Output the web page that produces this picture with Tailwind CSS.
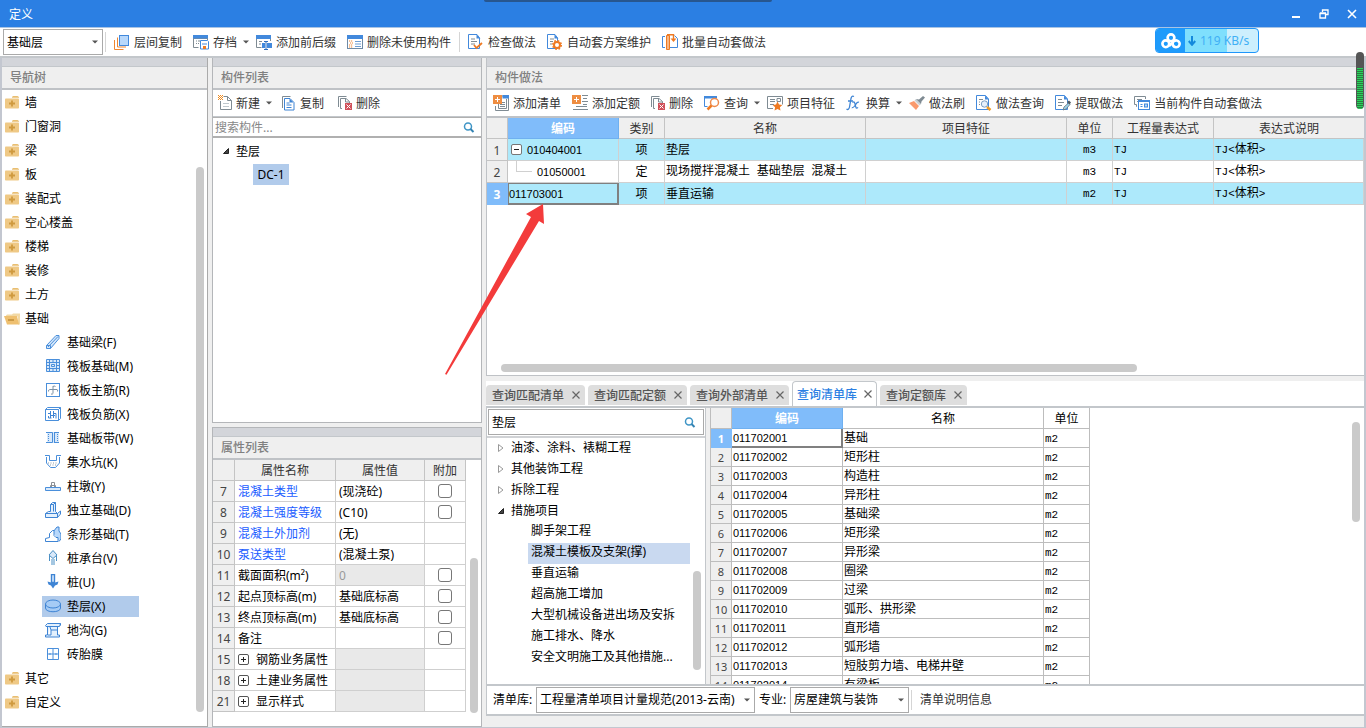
<!DOCTYPE html>
<html lang="zh-CN">
<head>
<meta charset="utf-8">
<title>定义</title>
<script src="https://cdn.jsdelivr.net/npm/@tailwindcss/browser@4"></script>
</head>
<body class="relative flex h-screen flex-col overflow-hidden bg-[#efefef] font-['Noto_Sans','Noto_Sans_CJK_SC',sans-serif] text-xs leading-4 text-black">

<!-- icon sprite -->
<svg class="hidden" xmlns="http://www.w3.org/2000/svg">
  <symbol id="copy-layer" viewBox="0 0 16 16"><path d="M3.500 3.500v9.500h8.500M.5 6v9.500h9" fill="none" stroke="#ef8632" stroke-width="1"/><rect x="5.500" y="1.500" width="9" height="10" fill="#b8d8fb" stroke="#4289dc"/></symbol>
  <symbol id="archive" viewBox="0 0 16 16"><path d="M.5 1v12.500h5M1 4.500h14M14.500 2v4" fill="none" stroke="#7f8b93"/><rect x="0" y="1" width="15" height="3.500" fill="#4289dc"/><path d="M3 7h1m1 0h2M3 9.500h1m1 0h1" stroke="#7f8b93"/><path d="M7.500 6.500h7l1 1v7.500h-8z" fill="#fff" stroke="#4289dc"/><path d="M9 10h5" stroke="#4289dc"/><rect x="10" y="12" width="3" height="3" fill="#ef7a22"/></symbol>
  <symbol id="affix" viewBox="0 0 16 16"><path d="M.5 2v11.500h5" fill="none" stroke="#7f8b93"/><rect x="0" y="1" width="15" height="4" fill="#4289dc"/><path d="M14.500 5v2M3 7.500h3M3 10h2" stroke="#7f8b93"/><path d="M6 9h3v5H6zM11 9h5v5h-5z" fill="#4289dc"/><path d="M10 7v8M8 15.500h4M8 7.500h4" stroke="#2f6fbd" fill="none"/></symbol>
  <symbol id="del-unused" viewBox="0 0 16 16"><rect x=".5" y="1.500" width="15" height="13" fill="#fff" stroke="#6e8aa5"/><rect x="0" y="1" width="16" height="4" fill="#4289dc"/><path d="M8 7.500h6M8 10h6M8 12.500h6" stroke="#6f9fd4"/><path d="M2 7h4M3 9h3M2 11h4M2 13h4" stroke="#ef8632" stroke-width="1" stroke-dasharray="1.200 .8"/></symbol>
  <symbol id="doc-check" viewBox="0 0 16 16"><path d="M9 .5H.5v14h11V4z" fill="#fff" stroke="#4289dc"/><path d="M8.500 .5v4h4z" fill="#4289dc"/><path d="M3 5h4M3 7.500h6M3 10h4" stroke="#7f8b93"/><path d="M6 11l2.500 3L14 9" fill="none" stroke="#ef7a22" stroke-width="1.800"/></symbol>
  <symbol id="doc-gear" viewBox="0 0 16 16"><path d="M8 .5H.5v14h10V4z" fill="#fff" stroke="#4289dc"/><path d="M7.500 .5v4h4z" fill="#4289dc"/><path d="M3 5h4M3 7.500h3M3 10h2" stroke="#7f8b93"/><circle cx="10" cy="11" r="3" fill="#fff" stroke="#ef7a22" stroke-width="2"/><circle cx="10" cy="11" r="4.300" fill="none" stroke="#ef7a22" stroke-width="1.500" stroke-dasharray="1.700 1.680"/></symbol>
  <symbol id="batch" viewBox="0 0 16 16"><path d="M3 2.500H.5v11H3M8 13.500h7.500v-9L12.500 1.500" fill="none" stroke="#4289dc"/><path d="M4.500 1.500h3v14h-3z" fill="#f8b684" stroke="#ef7a22"/><path d="M5 .8h6.500V5" fill="none" stroke="#ef7a22" stroke-width="1.400"/><path d="M8.500 4.500h6L11.500 8z" fill="#ef7a22"/></symbol>
  <symbol id="new-doc" viewBox="0 0 14 16"><path d="M5.500 1.500H9.500l4 4v9h-11V6" fill="#fff" stroke="#7f8b93"/><path d="M9.500 1.500V5.500h4" fill="none" stroke="#7f8b93"/><path d="M5 8.500h6M5 11.500h6" stroke="#bfc8ce"/><path d="M0 .5h5M0 2.500h5M0 4.500h5M1 1.500h4M1 3.500h4" stroke="#ef8a1d" stroke-dasharray="1 1"/></symbol>
  <symbol id="copy" viewBox="0 0 14 16"><path d="M.5 13V1.500h8" fill="none" stroke="#7f8b93"/><path d="M2.500 3.500H8l4 4v7.500H2.500z" fill="#fff" stroke="#3e84d4"/><path d="M7.500 3.500v4h4z" fill="#3e84d4"/><path d="M4.500 8h3M4.500 10h5M4.500 12.500h5" stroke="#3e84d4"/></symbol>
  <symbol id="delete" viewBox="0 0 14 16"><path d="M.5 12V1.500h8M4 13.500H2.500v-10H8l3.500 3V8M7.500 3.500v3.500h4" fill="none" stroke="#7f8b93"/><rect x="7" y="8" width="7" height="7" fill="#d0505a"/><path d="M8.500 9.500l4 4m0-4l-4 4" stroke="#fff"/></symbol>
  <symbol id="add-list" viewBox="0 0 16 16"><path d="M9 1h6.500v11" fill="none" stroke="#7f8b93"/><rect x="9.500" y="0" width="6.500" height="3.500" fill="#4289dc"/><path d="M13.500 4v9.500h-8V9M2.500 11v4.500H15.500V4M8 7.500h4M7 9.500h5M7 11.500h5" fill="none" stroke="#7f8b93"/><rect x="0" y="0" width="9" height="9" fill="#ee8d41"/><path d="M4.500 2v5M2 4.500h5" stroke="#fff"/></symbol>
  <symbol id="add-quota" viewBox="0 0 16 16"><rect x="0" y="0" width="9" height="9" fill="#ee8d41"/><path d="M4.500 2v5M2 4.500h5" stroke="#fff"/><path d="M10 .5H16M11 3.500H15M10 6.500H16M11 9.500h4M4 11.500h11M1 14.500h15" stroke="#7f8b93"/></symbol>
  <symbol id="query" viewBox="0 0 16 16"><path d="M.5 2v9.500h3" fill="none" stroke="#4289dc"/><rect x="0" y="1" width="13" height="2.500" fill="#4289dc"/><circle cx="10.500" cy="7.500" r="4" fill="#fff" stroke="#ef8a4b" stroke-width="1.500"/><path d="M7.500 10.500L3.500 14.500" stroke="#ef7a22" stroke-width="2.500"/></symbol>
  <symbol id="feature" viewBox="0 0 16 16"><path d="M6 13.500H.5v-12h15v8" fill="#fff" stroke="#7f8b93"/><path d="M3 4.500h5M3 6.500h5M3 9.500h4M10 3.500h3.500v3H10z" fill="none" stroke="#7f8b93"/><path d="M10.500 6.500l1.500 3 3.300.400-2.400 2.300.6 3.300-3-1.600-3 1.600.6-3.300-2.400-2.300 3.300-.4z" fill="#ef7a22"/></symbol>
  <symbol id="fx" viewBox="0 0 16 16"><path d="M8 1.500C6 .5 5.300 2 4.900 4L3.600 11.500c-.4 2.500-1.400 3.500-3.100 2.700M2 6h5" fill="none" stroke="#3e84d4" stroke-width="1.300"/><path d="M6.500 7.500c1.500-1.300 2-.5 2.500 1.500l.8 3c.4 1.500 1.200 1.500 2.200.3M13 7.300c-2-.7-2.500 1-4 3.200-1.500 2.200-2 2.700-3.200 2.100" fill="none" stroke="#3e84d4" stroke-width="1.200"/></symbol>
  <symbol id="brush" viewBox="0 0 16 16"><path d="M0 8l5-2 5 5-3 4z" fill="#f99a6e"/><path d="M5.500 5.500L7 4l5 5-1.500 1.500z" fill="#c9d0d4"/><path d="M7 4l3 .5L14 1l2 1.500-3.500 4L12 9z" fill="#7f8b93"/></symbol>
  <symbol id="doc-query" viewBox="0 0 16 16"><path d="M9.500 .5H.5v14h12V4z" fill="#fff" stroke="#4289dc"/><path d="M9 .5v4h4z" fill="#4289dc"/><path d="M3 4.500h4M3 7h1M3 9.500h1" stroke="#7f8b93"/><circle cx="8.500" cy="9" r="3.200" fill="#e6f0fb" stroke="#7d9fc4"/><path d="M11 12l3.500 3" stroke="#f09a23" stroke-width="2.500"/></symbol>
  <symbol id="doc-pick" viewBox="0 0 16 16"><path d="M9.500 .5H.5v14h12V4z" fill="#fff" stroke="#4289dc"/><path d="M9 .5v4h4z" fill="#4289dc"/><path d="M3 4.500h4M3 7.500h6M3 10.500h4" stroke="#7f8b93"/><path d="M8 15l1-3 4.500-4 1.500 1.500L11 14z" fill="#9ed2ea" stroke="#66727a" stroke-width=".8"/><path d="M12 7l2-1.500 2 2-1.500 2z" fill="#4d5960"/></symbol>
  <symbol id="auto-set" viewBox="0 0 16 16"><path d="M3 11.500H2.500v-2H.5v-8h11V4M3 4.500h5M3 6.500h1" fill="none" stroke="#7f8b93"/><rect x="4.500" y="5.500" width="11" height="9" fill="#fff" stroke="#4289dc"/><path d="M4 6h12" stroke="#4289dc" stroke-width="2"/><path d="M6.500 9.500h2M6.500 11.500h2" stroke="#4289dc"/><rect x="10.500" y="9" width="3" height="3" fill="#b8d8fb" stroke="#4289dc"/></symbol>
  <symbol id="search" viewBox="0 0 16 16"><circle cx="7" cy="7.500" r="3.500" fill="#fff" stroke="#3f95c6" stroke-width="1.500"/><path d="M9.500 10l3 3" stroke="#3483b2" stroke-width="2"/></symbol>
  <symbol id="folder-add" viewBox="0 0 16 16"><path d="M8 3l1-1h4.500L15 3v.7H8z" fill="#e9be70"/><rect x="1" y="4.500" width="14" height="10" rx=".8" fill="#efc986"/><path d="M8 6.500v6M5 9.500h6" stroke="#cf9a3f" stroke-width="1.800"/></symbol>
  <symbol id="folder-open" viewBox="0 0 16 16"><path d="M2 5.500l1-1h5l1-1h7v11h-2v-8H2z" fill="#f2d9a5"/><path d="M0 6h13l2 8.500H3z" fill="#efc070"/><path d="M4 10h6" stroke="#b98530" stroke-width="1.300"/></symbol>
  <symbol id="n-beam" viewBox="0 0 16 16"><path d="M1.500 11.500L11 1.500h3v3L5.500 14.500h-4zM3 13L13 2.500M1.500 11.500h4v3" fill="#d3e6fa" stroke="#4a8fdb"/></symbol>
  <symbol id="n-raft" viewBox="0 0 16 16"><path d="M1.500 1.500h13v12h-13zM4.500 1.500v12M11.500 1.500v12M1.500 4.500h13M1.500 10.500h13M6.500 6.500h3v2h-3zM8 2v2M8 11v2M2 7.500h2M12 7.500h2" fill="#d9e9fa" stroke="#4a8fdb"/></symbol>
  <symbol id="n-main" viewBox="0 0 16 16"><rect x="1.500" y="1.500" width="13" height="13" fill="#fff" stroke="#4a8fdb"/><path d="M8 4v7.500q-.5 1-2 .5M8 4.500q1-1 2.500 0M3.500 9.500q0-2 1-2h7.500q1 0 .5 2" fill="none" stroke="#7c92a5"/></symbol>
  <symbol id="n-neg" viewBox="0 0 16 16"><path d="M.5 3.500l2-2h13v11l-2 2H.5zM.5 3.500h13v11M13.500 3.500l2-2" fill="#fff" stroke="#4a8fdb"/><path d="M5.500 5v7M8.500 5v7M3 7.500h3M8 7.500h3v5M3.500 10v2h3M6 9.500h4" fill="none" stroke="#3e84d4"/></symbol>
  <symbol id="n-strip" viewBox="0 0 16 16"><path d="M2 2h12v11H2z" fill="#d9e9fa"/><path d="M1 2.500h6.500M9 2.500h5M1 12.500h6.500M9 12.500h5M7.500 2.500v10M9.500 2.500v10" stroke="#4a8fdb"/><path d="M3.500 4v8M12.500 4v8" stroke="#4a8fdb" stroke-dasharray="1 1"/></symbol>
  <symbol id="n-pit" viewBox="0 0 16 16"><path d="M0 1.500h4.500v5h7v-5H16M1.500 3v6l4 4.500h5l4-4.500V3" fill="none" stroke="#4a8fdb"/><path d="M3 9h10M5 11h6" stroke="#8b9aa6" stroke-dasharray="1 1.500"/></symbol>
  <symbol id="n-pier" viewBox="0 0 16 16"><path d="M.5 9.500h15v3H.5z" fill="#d9e9fa" stroke="#4a8fdb"/><path d="M6.500 9V4.500h3V9M5.500 9V7.500h5V9" fill="none" stroke="#8b8f94"/></symbol>
  <symbol id="n-indep" viewBox="0 0 16 16"><path d="M.5 11.500h12v4H.5zM.5 11.500l3-2h2V2.500l2-2h3v9l2 2 3-2.500v3l-3 3.500M5.500 2.500h3v7M8.500 2.500l2-2" fill="#e4f0fc" stroke="#3e84d4"/></symbol>
  <symbol id="n-bar" viewBox="0 0 16 16"><path d="M8 6l4-5h2v4l2 3v5l-2 2.500" fill="#b8d8fb" stroke="#3e84d4"/><path d="M.5 15.500v-3l4-1V7.500l3-3H9v5l2 2h2v4z" fill="#fff" stroke="#3e84d4"/></symbol>
  <symbol id="n-cap" viewBox="0 0 16 16"><path d="M8 .5L12 5 8 8.500 4 5zM4.500 6v5M7 9v6M9 9v6M11.500 6v5" fill="#d9e9fa" stroke="#4a8fc4"/></symbol>
  <symbol id="n-pile" viewBox="0 0 16 16"><path d="M6.500 .5h3v8h-3z" fill="#d9e9fa" stroke="#3e84d4" stroke-width="1.400"/><path d="M2.500 7.500L6 8.500h4l3.500-1-1 3-2.500 1L8 14.500 6 11.500l-2.500-1z" fill="#3e84d4"/></symbol>
  <symbol id="n-cushion" viewBox="0 0 16 16"><path d="M.5 6v4c0 5 15 5 15 0V6" fill="#a5cbf5" stroke="#3e84d4"/><ellipse cx="8" cy="6" rx="7.500" ry="4" fill="#a5cbf5" stroke="#3e84d4"/></symbol>
  <symbol id="n-trench" viewBox="0 0 16 16"><path d="M.5 3.500l2-2h13l-1 3H1zM2.500 5v8H.5v2h14v-2h-2V5M5 5l1 3v5H3M12 8H6M15.500 1.500v2" fill="#e4f0fc" stroke="#3e84d4"/></symbol>
  <symbol id="n-brick" viewBox="0 0 16 16"><path d="M2.500 2.500h11v11h-11zM8 2.500v11M2.500 8h11M5 7v2M11 7v2" fill="#fff" stroke="#4a8fdb"/></symbol>
  <symbol id="caret" viewBox="0 0 6 4"><path d="M0 .5h6L3 3.500z" fill="#555"/></symbol>
  <symbol id="tri-open" viewBox="0 0 8 8"><path d="M6.500 1.500v5H1.500z" fill="#444" stroke="#222"/></symbol>
  <symbol id="tri-closed" viewBox="0 0 8 8"><path d="M1.500 .5l4.500 3.500-4.500 3.500z" fill="#fff" stroke="#999"/></symbol>
  <symbol id="close" viewBox="0 0 8 8"><path d="M.5 .5l7 7m0-7l-7 7" stroke="#666" stroke-width="1.200"/></symbol>
  <symbol id="plus-box" viewBox="0 0 11 11"><rect x=".5" y=".5" width="10" height="10" rx="1.500" fill="#fff" stroke="#555"/><path d="M3 5.500h5M5.500 3v5" stroke="#222"/></symbol>
  <symbol id="minus-box" viewBox="0 0 11 11"><rect x=".5" y=".5" width="10" height="10" rx="1.500" fill="#fff" stroke="#777"/><path d="M3 5.500h5" stroke="#222"/></symbol>
</svg>

<!-- title bar -->
<header class="flex h-7 shrink-0 items-center justify-between border-b border-[#a9c4e4] bg-[#2b7fe3] pr-2 pl-[9px] text-white">
  <h1 class="pt-0.5">定义</h1>
  <div class="flex gap-4">
    <button aria-label="最小化" class="size-3"><svg viewBox="0 0 12 12" class="size-3"><path d="M2 9h8" stroke="#fff" stroke-width="2"/></svg></button>
    <button aria-label="还原" class="size-3"><svg viewBox="0 0 12 12" class="size-3"><path d="M2 5.500h5.500V10H2zM2 5h6M4.500 4V2H10v4.500H8M4 2h6" fill="none" stroke="#fff" stroke-width="1.300"/></svg></button>
    <button aria-label="关闭" class="size-3"><svg viewBox="0 0 12 12" class="size-3"><path d="M2 2l8 8m0-8l-8 8" stroke="#fff" stroke-width="1.600"/></svg></button>
  </div>
</header>
<div class="absolute top-0 left-[484px] h-0.5 w-[288px] rounded-b bg-[#27568f]"></div>

<!-- main toolbar -->
<div class="flex h-[30px] shrink-0 items-center border-b-2 border-[#c3c7cb] bg-white pl-[3px] text-[#333]" role="toolbar">
  <div class="relative">
    <select aria-label="楼层" class="block h-[26px] w-[100px] appearance-none border border-[#aaa] bg-white pt-0.5 pl-[3px] text-black"><option>基础层</option></select>
    <svg class="pointer-events-none absolute top-[11px] right-[5px] h-1 w-1.5"><use href="#caret"/></svg>
  </div>
  <div class="mr-[3px] ml-0.5 h-5 w-px bg-[#d5d5d5]"></div>
  <div id="tools-main" class="flex gap-px"></div>
</div>

<main class="flex min-h-0 flex-1 gap-1 border-r-2 border-b border-l-2 border-[#c3c7d0]">

  <!-- navigation tree -->
  <section class="flex w-[206px] shrink-0 flex-col border-r border-b border-[#aaa] bg-white">
    <div class="h-[9px] shrink-0 border-b border-[#c3c7cb] bg-[#d3d5da]"></div>
    <h2 class="h-[23px] shrink-0 border-b-2 border-[#bfc2c6] bg-[#efefef] pt-[3px] pl-2 font-medium text-[#808080]">导航树</h2>
    <div class="flex min-h-0 flex-1 justify-between">
      <ul id="nav" role="tree"></ul>
      <div class="mt-[77px] mr-[3px] mb-[14px] w-2 rounded-full bg-[#cacaca]"></div>
    </div>
  </section>

  <!-- component list and properties -->
  <div class="flex w-[270px] shrink-0 flex-col gap-1">
    <section class="flex min-h-0 flex-1 flex-col border-x border-b border-[#b4b6b9] bg-white">
      <div class="h-[9px] shrink-0 border-b border-[#c3c7cb] bg-[#d3d5da]"></div>
      <h2 class="h-[23px] shrink-0 border-b-2 border-[#bfc2c6] bg-[#efefef] pt-[3px] pl-2 font-medium text-[#808080]">构件列表</h2>
      <div id="tools-comp" class="flex h-[27px] shrink-0 items-center gap-1 border-b border-[#c3c7cb] text-[#333]" role="toolbar"></div>
      <div class="flex h-[21px] shrink-0 items-center border-t border-b-2 border-[#b0b0b0] pr-1">
        <input aria-label="搜索构件" placeholder="搜索构件..." class="min-w-0 flex-1 pt-0.5 pl-0.5 outline-none placeholder:text-[#888]">
        <svg class="size-4"><use href="#search"/></svg>
      </div>
      <ul role="tree" class="pt-px">
        <li role="treeitem" class="flex h-6 items-center gap-1.5 pl-[9px]"><svg class="size-2"><use href="#tri-open"/></svg><span class="pt-0.5">垫层</span></li>
        <li role="treeitem" aria-selected="true" class="mt-px ml-10 flex h-[21px] w-9 items-center justify-center bg-[#b1cbeb]">DC-1</li>
      </ul>
    </section>
    <section class="flex h-[300px] shrink-0 flex-col border border-[#b4b6b9] bg-white">
      <div class="h-[9px] shrink-0 border-b border-[#c3c7cb] bg-[#d3d5da]"></div>
      <h2 class="h-[23px] shrink-0 border-b-2 border-[#bfc2c6] bg-[#efefef] pt-[3px] pl-2 font-medium text-[#808080]">属性列表</h2>
      <div class="flex min-h-0 flex-1 justify-between">
        <table class="table-fixed border-separate border-spacing-0 self-start">
          <colgroup><col class="w-[22px]"><col class="w-[101px]"><col class="w-[89px]"><col class="w-[41px]"></colgroup>
          <thead><tr class="text-[#333]">
            <th class="h-[21px] border-r border-b border-[#c4c4c4] bg-[#efefef]"></th>
            <th class="border-r border-b border-[#c4c4c4] bg-[#efefef] pt-0.5 font-normal">属性名称</th>
            <th class="border-r border-b border-[#c4c4c4] bg-[#efefef] pt-0.5 font-normal">属性值</th>
            <th class="border-r border-b border-[#c4c4c4] bg-[#efefef] pt-0.5 font-normal">附加</th>
          </tr></thead>
          <tbody id="props"></tbody>
        </table>
        <div class="mt-[98px] mr-[3px] mb-[13px] w-2 rounded-full bg-[#cacaca]"></div>
      </div>
    </section>
  </div>

  <!-- component methods -->
  <div class="flex min-w-0 flex-1 flex-col">
    <section class="flex min-h-0 flex-1 flex-col border-b border-l border-[#bfc2c6] bg-white">
      <div class="h-[9px] shrink-0 border-b border-[#c3c7cb] bg-[#d3d5da]"></div>
      <h2 class="h-[23px] shrink-0 border-b-2 border-[#bfc2c6] bg-[#efefef] pt-[3px] pl-2 font-medium text-[#808080]">构件做法</h2>
      <div id="tools-method" class="flex h-7 shrink-0 items-center gap-px border-b-2 border-[#bfc2c6] pl-px text-[#333]" role="toolbar"></div>
      <table class="w-full table-fixed border-separate border-spacing-0">
        <colgroup><col class="w-[21px]"><col class="w-[111px]"><col class="w-[46px]"><col class="w-[201px]"><col class="w-[201px]"><col class="w-[46px]"><col class="w-[101px]"><col></colgroup>
        <thead><tr class="text-[#333]">
          <th class="h-[21px] border-r border-b border-[#c4c4c4] bg-[#efefef]"></th>
          <th class="border-r border-b border-[#6fb0f0] bg-[#80bcfa] pt-0.5 font-bold text-white">编码</th>
          <th class="border-r border-b border-[#c4c4c4] bg-[#efefef] pt-0.5 font-normal">类别</th>
          <th class="border-r border-b border-[#c4c4c4] bg-[#efefef] pt-0.5 font-normal">名称</th>
          <th class="border-r border-b border-[#c4c4c4] bg-[#efefef] pt-0.5 font-normal">项目特征</th>
          <th class="border-r border-b border-[#c4c4c4] bg-[#efefef] pt-0.5 font-normal">单位</th>
          <th class="border-r border-b border-[#c4c4c4] bg-[#efefef] pt-0.5 font-normal">工程量表达式</th>
          <th class="border-b border-[#c4c4c4] bg-[#efefef] pt-0.5 font-normal">表达式说明</th>
        </tr></thead>
        <tbody id="methods"></tbody>
      </table>
      <div class="mt-auto mb-[3px] ml-[14px] h-2 w-[72.5%] rounded-full bg-[#cacaca]"></div>
    </section>

    <section class="mt-[5px] mb-[11px] flex h-[335px] shrink-0 flex-col border-b-2 border-[#c3c7cb] bg-white">
      <div id="tabs" role="tablist" class="flex h-[27px] shrink-0 items-end gap-[3px] border-b-2 border-[#c3c7cb]"></div>
      <div class="flex min-h-0 flex-1 border-l border-[#c3c7cb]">
        <div class="flex w-[218px] shrink-0 flex-col">
          <div class="flex h-[30px] shrink-0 items-start border-b-2 border-[#d0d2d5] px-px">
            <div class="mt-px flex h-[26px] flex-1 items-center border border-[#aaa] pr-[5px]">
              <input aria-label="搜索清单" value="垫层" class="min-w-0 flex-1 pt-0.5 pl-[3px] outline-none">
              <svg class="size-4"><use href="#search"/></svg>
            </div>
          </div>
          <div class="flex min-h-0 flex-1 justify-between">
            <ul id="lib" role="tree" class="min-w-0 flex-1"></ul>
            <div class="mt-[133px] mr-1 mb-[14px] w-2 rounded-full bg-[#cacaca]"></div>
          </div>
        </div>
        <div class="w-[5px] shrink-0 border-l border-[#c3c7cb] bg-[#efefef]"></div>
        <div class="min-h-0 flex-1 overflow-hidden border-l border-[#bdbdbd]">
          <table class="table-fixed border-separate border-spacing-0">
            <colgroup><col class="w-[21px]"><col class="w-[111px]"><col class="w-[201px]"><col class="w-[46px]"></colgroup>
            <thead><tr>
              <th class="h-[21px] border-r border-b border-[#bdbdbd] bg-[#efefef]"></th>
              <th class="border-r border-b border-[#6fb0f0] bg-[#80bcfa] pt-0.5 font-bold text-white">编码</th>
              <th class="border-r border-b border-[#bdbdbd] pt-0.5 font-normal">名称</th>
              <th class="border-r border-b border-[#bdbdbd] pt-0.5 font-normal">单位</th>
            </tr></thead>
            <tbody id="grid"></tbody>
          </table>
        </div>
        <div class="mt-[14px] mr-1 h-[100px] w-2 shrink-0 rounded-full bg-[#cacaca]"></div>
      </div>
      <div class="flex h-[30px] shrink-0 items-center border-t-2 border-l border-[#c3c7cb] pl-1.5">
        <label for="lib-select" class="mr-[3px] w-10">清单库:</label>
        <div class="relative">
          <select id="lib-select" class="block h-[26px] w-[219px] appearance-none border border-[#aaa] bg-white pl-[3px]"><option>工程量清单项目计量规范(2013-云南)</option></select>
          <svg class="pointer-events-none absolute top-[11px] right-[5px] h-1 w-1.5"><use href="#caret"/></svg>
        </div>
        <label for="major-select" class="mr-[3px] ml-1 w-7">专业:</label>
        <div class="relative">
          <select id="major-select" class="block h-[26px] w-[119px] appearance-none border border-[#aaa] bg-white pl-[3px]"><option>房屋建筑与装饰</option></select>
          <svg class="pointer-events-none absolute top-[11px] right-[5px] h-1 w-1.5"><use href="#caret"/></svg>
        </div>
        <div class="mr-2 ml-0.5 h-5 w-px bg-[#d5d5d5]"></div>
        <button class="text-[#333]">清单说明信息</button>
      </div>
    </section>
  </div>
</main>

<!-- network speed widget -->
<div class="absolute top-7 left-[1155px] flex h-[25px] w-[104px] items-center overflow-hidden rounded border border-[#1e96fa] bg-[#cdeffd] text-[#3fb0f5]">
  <div class="flex h-full w-[29px] items-center justify-center bg-[#1e9bfb]">
    <svg viewBox="0 0 20 16" class="h-4 w-5" fill="none" stroke="#fff" stroke-width="2.600"><circle cx="10" cy="4.800" r="3.400"/><circle cx="4.800" cy="10.800" r="3.400"/><path d="M12.500 8c-1.500 2-1 6 2.700 6.200a3.400 3.400 0 1 0-2.400-5.800L8 13"/></svg>
  </div>
  <div class="h-full w-[42px] bg-[#7fdffd]"></div>
  <div class="absolute top-1 left-8 flex items-center gap-1">
    <svg viewBox="0 0 8 10" class="h-2.5 w-2"><path d="M4 0v8M.8 5L4 8.800 7.200 5" fill="none" stroke="#1489dc" stroke-width="2"/></svg>
    119 KB/s
  </div>
</div>

<!-- volume meter -->
<div class="absolute top-[52px] right-0.5 flex h-[57px] w-2 flex-col overflow-hidden rounded-full bg-[#555] px-px pt-4">
  <div class="flex-1 bg-[repeating-linear-gradient(#27d45a_0_1px,#2c7a42_1px_2px)]"></div>
</div>

<!-- pointer arrow -->
<svg class="pointer-events-none absolute top-[200px] left-[440px] h-[180px] w-[110px]" viewBox="0 0 110 180"><path d="M103 4L86 14l5 3L5 174l1.500.8L99 21l5 3z" fill="#f33b3b"/></svg>

<script>
const $ = id => document.getElementById(id);
const icon = (n, c = 'size-4 shrink-0') => `<svg class="${c}"><use href="#${n}"/></svg>`;
const label = t => `<span class="pt-0.5">${t}</span>`;

const toolIcon = n => icon(n, ['new-doc', 'copy', 'delete'].includes(n) ? 'h-4 w-[14px] shrink-0' : 'size-4 shrink-0');
const tool = ([ic, text, drop]) => ic === '|'
  ? '<div class="mx-0.5 h-5 w-px self-center bg-[#d5d5d5]"></div>'
  : drop
    ? `<button class="flex h-6 shrink-0 items-center gap-1 whitespace-nowrap rounded pr-px pl-[5px]">${toolIcon(ic)}${label(text)}${icon('caret', 'ml-0.5 h-1 w-1.5')}</button>`
    : `<button class="flex h-6 shrink-0 items-center gap-1 whitespace-nowrap rounded px-[5px]">${toolIcon(ic)}${label(text)}</button>`;

$('tools-main').innerHTML = [['copy-layer', '层间复制'], ['archive', '存档', 1], ['affix', '添加前后缀'], ['del-unused', '删除未使用构件'], ['|'], ['doc-check', '检查做法'], ['doc-gear', '自动套方案维护'], ['batch', '批量自动套做法']].map(tool).join('');
$('tools-comp').innerHTML = [['new-doc', '新建', 1], ['copy', '复制'], ['delete', '删除']].map(tool).join('');
$('tools-method').innerHTML = [['add-list', '添加清单'], ['add-quota', '添加定额'], ['delete', '删除'], ['query', '查询', 1], ['feature', '项目特征'], ['fx', '换算', 1], ['brush', '做法刷'], ['doc-query', '做法查询'], ['doc-pick', '提取做法'], ['auto-set', '当前构件自动套做法']].map(tool).join('');

const folder = t => `<li role="treeitem" class="flex h-6 items-center gap-[5px] pl-0.5">${icon(t === '基础' ? 'folder-open' : 'folder-add')}${label(t)}</li>`;
const leaf = ([ic, t]) => `<li role="treeitem" class="flex h-6 items-center pl-10"><span class="${t === '垫层(X)' ? 'flex h-[21px] w-[97px] items-center gap-1.5 bg-[#b1cbeb] pl-[3px]' : 'flex h-[21px] items-center gap-1.5 pl-[3px]'}">${icon(ic)}${label(t)}</span></li>`;
$('nav').innerHTML = ['墙', '门窗洞', '梁', '板', '装配式', '空心楼盖', '楼梯', '装修', '土方', '基础'].map(folder).join('')
  + [['n-beam', '基础梁(F)'], ['n-raft', '筏板基础(M)'], ['n-main', '筏板主筋(R)'], ['n-neg', '筏板负筋(X)'], ['n-strip', '基础板带(W)'], ['n-pit', '集水坑(K)'], ['n-pier', '柱墩(Y)'], ['n-indep', '独立基础(D)'], ['n-bar', '条形基础(T)'], ['n-cap', '桩承台(V)'], ['n-pile', '桩(U)'], ['n-cushion', '垫层(X)'], ['n-trench', '地沟(G)'], ['n-brick', '砖胎膜']].map(leaf).join('')
  + ['其它', '自定义'].map(folder).join('');

// number, name, value, kind (b: blue name, g: group), has checkbox, grey value cell
$('props').innerHTML = [
  [7, '混凝土类型', '(现浇砼)', 'b', 1], [8, '混凝土强度等级', '(C10)', 'b', 1], [9, '混凝土外加剂', '(无)', 'b'], [10, '泵送类型', '(混凝土泵)', 'b'],
  [11, '截面面积(m²)', '0', '', 1, 1], [12, '起点顶标高(m)', '基础底标高', '', 1], [13, '终点顶标高(m)', '基础底标高', '', 1], [14, '备注', '', '', 1],
  [15, '钢筋业务属性', '', 'g', 0, 1], [18, '土建业务属性', '', 'g', 0, 1], [21, '显示样式', '', 'g', 0, 1]
].map(([n, name, val, kind, check, grey]) => `<tr>
  <td class="h-[21px] border-r border-b border-[#c4c4c4] bg-[#efefef] pt-0.5 text-center text-[#444]">${n}</td>
  <td class="${kind === 'b' ? 'border-r border-b border-[#cfcfcf] pl-[3px] text-[#1a5cff]' : 'border-r border-b border-[#cfcfcf] pl-[3px]'}"><div class="flex items-center gap-[7px] whitespace-nowrap">${kind === 'g' ? icon('plus-box', 'size-[11px]') : ''}${label(name)}</div></td>
  <td class="${grey ? 'border-r border-b border-[#cfcfcf] bg-[#e9e9e9] pt-0.5 pl-[3px] text-[#999]' : 'border-r border-b border-[#cfcfcf] pt-0.5 pl-[3px]'}">${val}</td>
  <td class="border-r border-b border-[#cfcfcf]">${check ? `<input type="checkbox" aria-label="附加 ${name}" class="mx-auto block size-[14px] appearance-none rounded-[3px] border border-[#777] bg-white">` : ''}</td>
</tr>`).join('');

const mono = t => `<span class="font-['Liberation_Mono',monospace] text-[11px]">${t}</span>`;
const digits = t => `<span class="font-['Liberation_Sans',sans-serif] text-[11px]">${t}</span>`;
const cell = (t, on, c) => `<td class="${on ? 'border-r border-b border-[#d0d0d0] bg-[#ade9fb] px-px' : 'border-r border-b border-[#d0d0d0] bg-white px-px'}"><div class="${c}">${t}</div></td>`;
const codeCell = (n, code) => n === 1
  ? `<td class="border-r border-b border-[#d0d0d0] bg-[#ade9fb] pl-[3px]"><div class="flex items-center gap-[5px]">${icon('minus-box', 'size-[11px]')}${digits(code)}</div></td>`
  : n === 2
    ? `<td class="border-r border-b border-[#d0d0d0] bg-white pl-2"><div class="flex h-[21px] items-center gap-[5px]"><span class="h-[11px] w-4 self-start border-b border-l border-[#d0d0d0]"></span>${digits(code)}</div></td>`
    : `<td class="border border-r-2 border-b-2 border-[#808080] bg-[#ade9fb]">${digits(code)}</td>`;
$('methods').innerHTML = [[1, '010404001', '项', '垫层', 'm3'], [2, '01050001', '定', '现场搅拌混凝土 基础垫层 混凝土', 'm3'], [3, '011703001', '项', '垂直运输', 'm2']].map(([n, code, kind, name, unit]) => {
  const on = n !== 2;
  return `<tr><td class="${n === 3 ? 'h-[22px] border-r border-b border-[#80bcfa] bg-[#80bcfa] pt-0.5 text-center font-bold text-white' : 'h-[22px] border-r border-b border-[#c4c4c4] bg-[#efefef] pt-0.5 text-center text-[#444]'}">${n}</td>${codeCell(n, code)}${cell(kind, on, 'text-center')}${cell(name.replaceAll(' ', mono(' ')), on, 'whitespace-pre')}${cell('', on, '')}${cell(mono(unit), on, 'text-center')}${cell(mono('TJ'), on, '')}${cell(mono('TJ&lt;') + '体积' + mono('&gt;'), on, '')}</tr>`;
}).join('');

$('tabs').innerHTML = ['查询匹配清单', '查询匹配定额', '查询外部清单', '查询清单库', '查询定额库'].map(t => {
  const on = t === '查询清单库';
  return `<div class="${on ? 'flex h-[25px] items-center gap-[7px] rounded-t border border-b-0 border-[#c3c7cb] px-1 font-medium text-[#2b7fe3]' : 'mb-px flex h-5 items-center gap-2 rounded-t-sm bg-[#dedede] pr-[5px] pl-1.5 font-medium text-[#555]'}"><button role="tab" aria-selected="${on}" class="pt-0.5">${t}</button><button aria-label="关闭 ${t}">${icon('close', 'block size-2')}</button></div>`;
}).join('');

$('lib').innerHTML = ['油漆、涂料、裱糊工程', '其他装饰工程', '拆除工程', '措施项目'].map((t, i) => `<li role="treeitem" class="flex h-[21px] items-center gap-1.5 pb-0.5 pl-[10px]">${icon(i === 3 ? 'tri-open' : 'tri-closed', 'size-2')}${t}</li>`).join('')
  + ['脚手架工程', '混凝土模板及支架(撑)', '垂直运输', '超高施工增加', '大型机械设备进出场及安拆', '施工排水、降水', '安全文明施工及其他措施...'].map((t, i) => `<li role="treeitem" class="${i === 1 ? 'mr-[3px] ml-[41px] h-[21px] bg-[#c9d9f0] pl-[3px] leading-[18px] whitespace-nowrap' : 'ml-[41px] h-[21px] pl-[3px] leading-[18px] whitespace-nowrap'}">${t}</li>`).join('');

$('grid').innerHTML = ['基础', '矩形柱', '构造柱', '异形柱', '基础梁', '矩形梁', '异形梁', '圈梁', '过梁', '弧形、拱形梁', '直形墙', '弧形墙', '短肢剪力墙、电梯井壁', '有梁板'].map((t, i) => `<tr>
  <td class="${i === 0 ? 'h-[19px] border-r border-b border-[#80bcfa] bg-[#80bcfa] pt-0.5 text-center text-[11px] leading-4 font-bold text-white' : 'h-[19px] border-r border-b border-[#bdbdbd] bg-[#efefef] pt-0.5 text-center text-[11px] leading-4 text-[#444]'}">${i + 1}</td>
  <td class="${i === 0 ? 'border-r-2 border-b-2 border-[#808080] px-px leading-4' : 'border-r border-b border-[#bdbdbd] px-px leading-4'}">${digits('0117020' + String(i + 1).padStart(2, '0'))}</td>
  <td class="border-r border-b border-[#bdbdbd] px-px leading-4">${t}</td>
  <td class="border-r border-b border-[#bdbdbd] px-px leading-4">${mono('m2')}</td>
</tr>`).join('');
</script>
</body>
</html>
